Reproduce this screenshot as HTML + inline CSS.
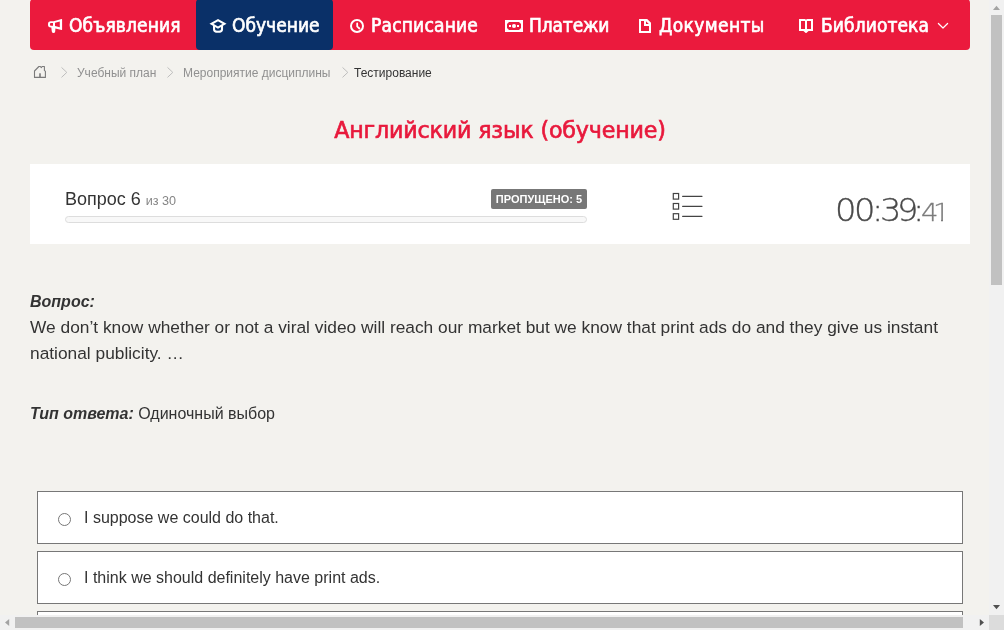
<!DOCTYPE html>
<html lang="ru">
<head>
<meta charset="utf-8">
<title>Тестирование</title>
<style>
html,body{margin:0;padding:0;}
html{overflow:hidden;}
body{width:1004px;height:630px;overflow:hidden;position:relative;background:#f3f2ee;font-family:"Liberation Sans",sans-serif;color:#333;}
#wrap{position:absolute;left:0;top:0;width:1004px;height:630px;overflow:hidden;will-change:transform;}
.abs{position:absolute;white-space:nowrap;}
/* nav */
#nav{position:absolute;left:30px;top:-1.5px;width:940px;height:51.5px;background:#eb1a3d;border-radius:4px;}
#nav .act{position:absolute;left:166px;top:0;width:137px;height:51.5px;background:#0a3068;border-radius:4px;}
.ni{display:block;text-decoration:none;position:absolute;top:12px;height:26px;line-height:26px;font-size:19px;-webkit-text-stroke:0.7px #fff;color:#fff;font-family:"DejaVu Sans","Liberation Sans",sans-serif;white-space:nowrap;transform-origin:0 50%;transform:scaleX(0.9);}
.ic{position:absolute;}
/* breadcrumb */
.bc{display:block;position:absolute;top:65px;height:16px;line-height:16px;font-size:12px;color:#909090;white-space:nowrap;}
/* title */
#title{margin:0;font-weight:normal;position:absolute;left:0;width:1000px;top:114.3px;height:32px;line-height:32px;text-align:center;letter-spacing:-0.17px;font-size:22.2px;color:#e8193c;-webkit-text-stroke:0.65px #e8193c;font-family:"DejaVu Sans","Liberation Sans",sans-serif;white-space:nowrap;}
#panel{position:absolute;left:30px;top:164px;width:940px;height:80px;background:#fff;}
.ans{display:block;position:absolute;left:37px;width:924px;height:51px;border:1px solid #777;background:#fff;}
.ans .r{-webkit-appearance:none;appearance:none;margin:0;padding:0;box-sizing:content-box;display:block;position:absolute;left:20px;top:21px;width:11px;height:11px;border:1px solid #767676;border-radius:50%;background:#fff;outline:none;}
.ans .t{display:block;position:absolute;left:46px;top:16px;line-height:20px;font-size:16px;color:#333;white-space:nowrap;}
.tg{position:absolute;top:187.2px;height:46px;line-height:46px;font-size:31.5px;transform:scaleX(1.07);transform-origin:0 50%;color:#4a4a4a;-webkit-text-stroke:0.3px #4a4a4a;font-family:"DejaVu Sans Light","DejaVu Sans",sans-serif;font-weight:200;white-space:nowrap;}
.tg.ts{font-size:25.6px;color:#7c7c7c;top:189px;-webkit-text-stroke:0.3px #7c7c7c}
/* scrollbars */
#vs{position:absolute;left:989px;top:0;width:15px;height:615px;background:#f1f1f1;}
#hs{position:absolute;left:0;top:615px;width:989px;height:15px;background:#f1f1f1;}
#corner{position:absolute;left:989px;top:615px;width:15px;height:15px;background:#dcdcdc;}
</style>
</head>
<body>
<div id="wrap">
<div id="nav"><div class="act"></div></div>

<a class="ni" id="n1" style="left:69.4px;letter-spacing:0.13px">Объявления</a>
<a class="ni" id="n2" style="left:232.2px">Обучение</a>
<a class="ni" id="n3" style="left:370.9px;letter-spacing:0.2px">Расписание</a>
<a class="ni" id="n4" style="left:528.8px;letter-spacing:-0.15px">Платежи</a>
<a class="ni" id="n5" style="left:659.4px;letter-spacing:0.42px">Документы</a>
<a class="ni" id="n6" style="left:820.5px;letter-spacing:0.1px">Библиотека</a>


<svg class="ic" style="left:44px;top:14px" width="24" height="24" viewBox="0 0 24 24"><path fill="#fff" fill-rule="evenodd" d="M6.8,7.2 L9.6,7.2 L17.6,5 Q18.1,4.9 18.1,5.4 L18.1,15.6 Q18.1,16.1 17.6,16 L11.4,14.4 L11.2,17.4 Q11,18.9 9.5,18.9 Q8.1,18.9 7.8,17.4 L7.3,13.6 L6.8,13.6 Q4,13.4 4,10.8 L4,10 Q4,7.2 6.8,7.2 Z M7,9 L9,9 L9,11.8 L7,11.8 Q5.9,11.8 5.9,10.4 Q5.9,9 7,9 Z M11,8.7 L15.8,7.6 L15.8,13.3 L11,11.9 Z"/></svg>
<svg class="ic" style="left:206px;top:14px" width="24" height="24" viewBox="0 0 24 24" fill="none" stroke="#fff"><path stroke-width="2" d="M12,6.1 L18.5,9.8 L12,13.5 L5.5,9.8 Z"/><path stroke-width="2.1" d="M8.05,12 V15.4 Q8.05,17.7 12,17.7 Q16,17.7 16,15.4 V12"/></svg>
<svg class="ic" style="left:345px;top:14px" width="24" height="24" viewBox="0 0 24 24" fill="none" stroke="#fff"><circle cx="12" cy="12" r="6" stroke-width="2"/><path stroke-width="1.8" stroke-linecap="round" stroke-linejoin="round" d="M12.2,9.4 V12.4 L14.4,14.5"/></svg>
<svg class="ic" style="left:502px;top:14px" width="24" height="24" viewBox="0 0 24 24"><rect x="3" y="6" width="18" height="12" fill="#fff"/><path fill="#eb1a3d" d="M7,8 H17 L19,10 V14 L17,16 H7 L5,14 V10 Z"/><circle cx="12" cy="12" r="2.05" fill="#fff"/><rect x="7" y="11" width="2" height="2" fill="#fff"/><rect x="15" y="11" width="2" height="2" fill="#fff"/></svg>
<svg class="ic" style="left:633px;top:14px" width="24" height="24" viewBox="0 0 24 24"><path fill="#fff" d="M6,5 H14.2 L18,8.8 V19 H6 Z"/><path fill="#eb1a3d" d="M8,7 H11 V12 H16 V17 H8 Z"/><path fill="#eb1a3d" d="M13,7.2 V10 H15.8 Z"/></svg>
<svg class="ic" style="left:794px;top:14px" width="24" height="24" viewBox="0 0 24 24"><path fill="#fff" d="M5,5 H11 L12,5.8 L13,5 H19 V17 H14.6 L12.6,18.8 Q12,19.2 11.4,18.8 L9.4,17 H5 Z"/><rect x="7" y="7" width="4" height="8" fill="#eb1a3d"/><rect x="13" y="7" width="4" height="8" fill="#eb1a3d"/></svg>
<svg class="ic" style="left:931px;top:14px" width="24" height="24" viewBox="0 0 24 24" fill="none" stroke="#fff"><path stroke-width="1.2" stroke-linecap="round" stroke-linejoin="round" d="M7.4,9.5 L12,14 L16.6,9.5"/></svg>

<svg class="ic" style="left:28px;top:60px" width="24" height="24" viewBox="0 0 24 24"><path fill="none" stroke="#7a7a7a" stroke-width="1.1" stroke-linejoin="round" d="M6.5,17.4 V11 L10.9,6.5 H12.4 L13.3,7.6 L14.2,6.5 H16.4 V10.4 L17.4,11.3 V17.4 Z"/><rect x="11.2" y="13.3" width="1.6" height="4.1" fill="#7a7a7a"/></svg>
<svg class="ic" style="left:55px;top:60px" width="24" height="24" viewBox="0 0 24 24"><path fill="none" stroke="#bdbdbd" stroke-width="1" d="M6.5,7.4 L11.8,12.4 L6.5,17.4"/></svg>
<svg class="ic" style="left:161px;top:60px" width="24" height="24" viewBox="0 0 24 24"><path fill="none" stroke="#bdbdbd" stroke-width="1" d="M6.5,7.4 L11.8,12.4 L6.5,17.4"/></svg>
<svg class="ic" style="left:336px;top:60px" width="24" height="24" viewBox="0 0 24 24"><path fill="none" stroke="#bdbdbd" stroke-width="1" d="M6.5,7.4 L11.8,12.4 L6.5,17.4"/></svg>

<a class="bc" style="left:77px">Учебный план</a>
<a class="bc" style="left:183px">Мероприятие дисциплины</a>
<span class="bc" style="left:354px;color:#333">Тестирование</span>

<h1 id="title">Английский язык (обучение)</h1>

<div id="panel"></div>
<svg class="ic" style="left:664px;top:186px" width="48" height="42" viewBox="0 0 48 42" fill="none" stroke="#444" stroke-width="1.2"><rect x="9.3" y="7.5" width="5.3" height="5.6"/><rect x="9.3" y="17.5" width="5.3" height="5.6"/><rect x="9.3" y="27.7" width="5.3" height="5.6"/><path stroke-linecap="round" d="M18.6,10.3 H38 M18.6,20.3 H38 M18.6,30.3 H38"/></svg>
<div class="abs" id="q" style="left:65px;top:188px;font-size:18px;line-height:22px;color:#333">Вопрос 6 <span style="font-size:12.6px;color:#858585">из 30</span></div>
<div class="abs" id="badge" style="left:491px;top:189px;width:96px;height:20px;line-height:20px;background:#777;color:#fff;font-size:11px;font-weight:bold;text-align:center;border-radius:2px">ПРОПУЩЕНО: 5</div>
<div class="abs" id="prog" style="left:65px;top:216px;width:520px;height:5px;border:1px solid #ddd;border-radius:4px;background:#f8f8f8"></div>
<div id="timer">
<span class="tg" style="left:835.3px">0</span><span class="tg" style="left:854.4px">0</span><span class="tg" style="left:872px">:</span><span class="tg" style="left:880.2px">3</span><span class="tg" style="left:896.5px">9</span><span class="tg" style="left:912.5px">:</span><span class="tg ts" style="left:920.7px">4</span><span class="tg ts" style="left:932.5px">1</span>
<div style="position:absolute;left:935px;top:219.3px;width:5.7px;height:3px;background:#fff"></div><div style="position:absolute;left:943.3px;top:219.3px;width:6px;height:3px;background:#fff"></div>
</div>

<div class="abs" style="left:30px;top:292px;font-size:16px;line-height:20px;font-weight:bold;font-style:italic;color:#333">Вопрос:</div>
<div class="abs" id="qt1" style="left:30px;top:314px;font-size:17.33px;line-height:26px;color:#333">We don’t know whether or not a viral video will reach our market but we know that print ads do and they give us instant</div>
<div class="abs" id="qt2" style="left:30px;top:340px;font-size:17.33px;line-height:26px;color:#333">national publicity. …</div>
<div class="abs" id="ty" style="left:30px;top:404px;font-size:16px;line-height:20px;color:#333"><b><i>Тип ответа:</i></b> Одиночный выбор</div>

<label class="ans" style="top:491px"><input type="radio" name="answer" class="r"><span class="t">I suppose we could do that.</span></label>
<label class="ans" style="top:551px"><input type="radio" name="answer" class="r"><span class="t">I think we should definitely have print ads.</span></label>
<label class="ans" style="top:611px"></label>

<div id="vs"><div style="position:absolute;left:2px;top:15px;width:11px;height:270px;background:#c1c1c1"></div>
<svg style="position:absolute;left:0;top:0" width="15" height="15" viewBox="0 0 15 15"><path fill="#a3a3a3" d="M4,10 L7.5,5.8 L11,10 Z"/></svg>
<svg style="position:absolute;left:0;top:600px" width="15" height="15" viewBox="0 0 15 15"><path fill="#505050" d="M4,5 L11,5 L7.5,9.2 Z"/></svg>
</div>
<div id="hs"><div style="position:absolute;left:15px;top:2px;width:948px;height:11px;background:#c1c1c1"></div>
<svg style="position:absolute;left:0;top:0" width="15" height="15" viewBox="0 0 15 15"><path fill="#a3a3a3" d="M9.2,4 L9.2,11 L5,7.5 Z"/></svg>
<svg style="position:absolute;left:974px;top:0" width="15" height="15" viewBox="0 0 15 15"><path fill="#505050" d="M5.8,4 L10,7.5 L5.8,11 Z"/></svg>
</div>
<div id="corner"></div>
</div>
</body>
</html>
